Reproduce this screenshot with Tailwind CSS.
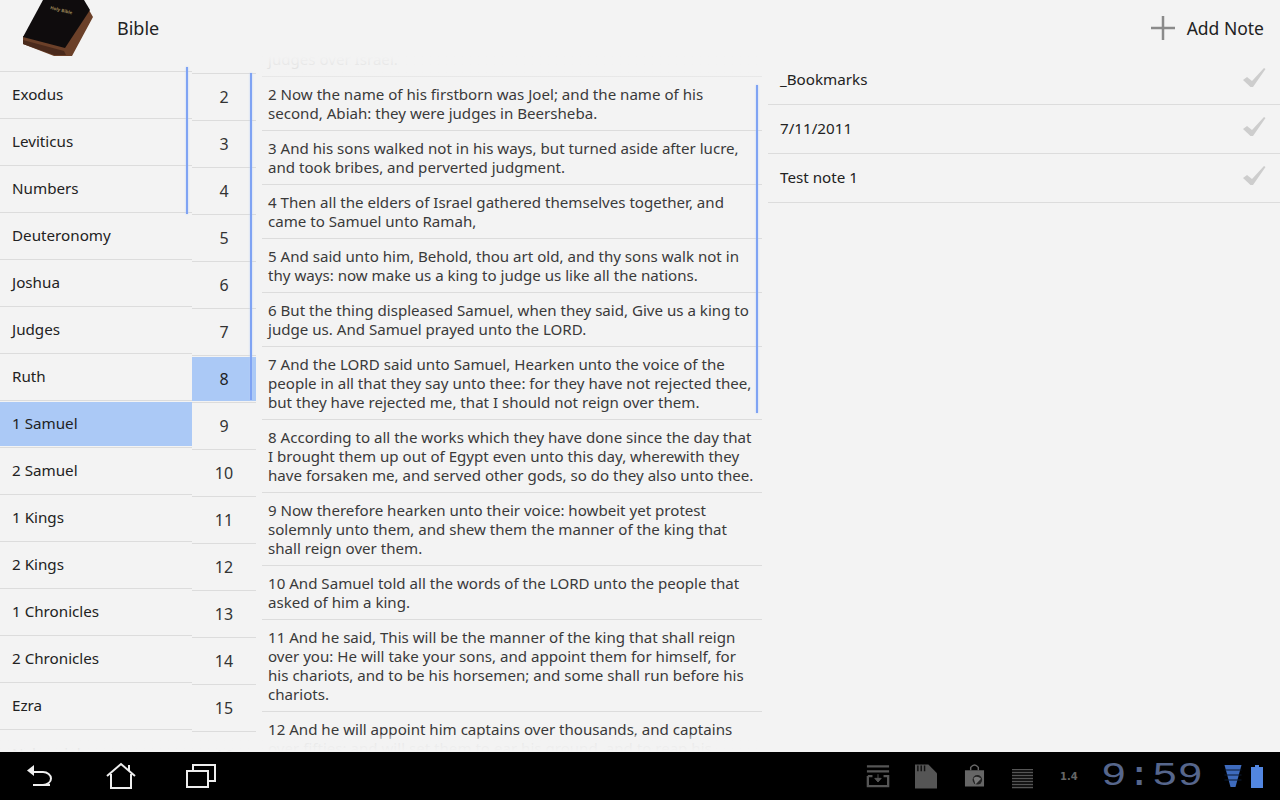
<!DOCTYPE html>
<html lang="en">
<head>
    <meta charset="UTF-8">
    <meta name="viewport" content="width=device-width, initial-scale=1.0">
    <title>Bible</title>
    <script src="https://cdn.jsdelivr.net/npm/@tailwindcss/browser@4"></script>
</head>
<body class="w-[1280px] h-[800px] overflow-hidden flex flex-col bg-[#f3f3f3] text-[#222] font-['Noto_Sans','Open_Sans',sans-serif]">

    <!-- Action bar -->
    <header class="h-[56px] shrink-0 flex items-center pl-[22px] pr-[16px]">
        <svg class="w-[74px] h-[56px]" viewBox="0 0 74 56">
            <path d="M1 36 L43 46 L67 10 L71 17 L50 56 L32 56 L1 44 Z" fill="#6b4029"/>
            <path d="M1 40 L42 51 L44 55 L32 55 L1 44 Z" fill="#4a2a1c"/>
            <path d="M21 0 L62 0 L68 10 L43 48 L1 37 Z" fill="#0f0c0d"/>
            <text x="28" y="9" transform="rotate(14 28 9)" font-size="4.5" fill="#9a8456" font-weight="700">Holy Bible</text>
        </svg>
        <span class="ml-[21px] text-[18px]">Bible</span>
        <button class="ml-auto flex items-center text-[17.5px]">
            <svg class="w-[24px] h-[24px] mr-[12px]" viewBox="0 0 24 24"><path d="M0 12H24M12 0V24" stroke="#8a8a8a" stroke-width="2.5"/></svg>
            Add Note
        </button>
    </header>

    <main class="h-[696px] flex">
        <!-- Books -->
        <section class="relative w-[192px] overflow-hidden pt-[15px] text-[15.2px]">
            <div class="border-t border-[#dcdcdc]">
                <div class="h-[47px] border-b border-[#dcdcdc] pl-[12px] pb-[1px] flex items-center">Exodus</div>
                <div class="h-[47px] border-b border-[#dcdcdc] pl-[12px] pb-[1px] flex items-center">Leviticus</div>
                <div class="h-[47px] border-b border-[#dcdcdc] pl-[12px] pb-[1px] flex items-center">Numbers</div>
                <div class="h-[47px] border-b border-[#dcdcdc] pl-[12px] pb-[1px] flex items-center">Deuteronomy</div>
                <div class="h-[47px] border-b border-[#dcdcdc] pl-[12px] pb-[1px] flex items-center">Joshua</div>
                <div class="h-[47px] border-b border-[#dcdcdc] pl-[12px] pb-[1px] flex items-center">Judges</div>
                <div class="h-[47px] border-b border-[#dcdcdc] pl-[12px] pb-[1px] flex items-center">Ruth</div>
                <div class="h-[47px] border-b border-[#dcdcdc] py-px bg-[#abc9f6] bg-clip-content"><div class="h-full pl-[12px] pb-[1px] flex items-center">1 Samuel</div></div>
                <div class="h-[47px] border-b border-[#dcdcdc] pl-[12px] pb-[1px] flex items-center">2 Samuel</div>
                <div class="h-[47px] border-b border-[#dcdcdc] pl-[12px] pb-[1px] flex items-center">1 Kings</div>
                <div class="h-[47px] border-b border-[#dcdcdc] pl-[12px] pb-[1px] flex items-center">2 Kings</div>
                <div class="h-[47px] border-b border-[#dcdcdc] pl-[12px] pb-[1px] flex items-center">1 Chronicles</div>
                <div class="h-[47px] border-b border-[#dcdcdc] pl-[12px] pb-[1px] flex items-center">2 Chronicles</div>
                <div class="h-[47px] border-b border-[#dcdcdc] pl-[12px] pb-[1px] flex items-center">Ezra</div>
                <div class="h-[47px] pl-[12px] pb-[1px] flex items-center">Nehemiah</div>
            </div>
            <div class="absolute left-0 right-0 bottom-0 h-[12px] bg-gradient-to-b from-[#f3f3f3]/80 to-[#f3f3f3]"></div>
            <div class="absolute left-[186px] top-[11px] w-[2px] h-[147px] bg-[#7fa3f3] shadow-[0_0_2px_#b5ccf8]"></div>
        </section>

        <!-- Chapters -->
        <section class="relative w-[64px] overflow-hidden pt-[17px] text-[16px] text-[#333]">
            <div class="border-t border-[#dcdcdc]">
                <div class="h-[47px] border-b border-[#dcdcdc] flex items-center justify-center">2</div>
                <div class="h-[47px] border-b border-[#dcdcdc] flex items-center justify-center">3</div>
                <div class="h-[47px] border-b border-[#dcdcdc] flex items-center justify-center">4</div>
                <div class="h-[47px] border-b border-[#dcdcdc] flex items-center justify-center">5</div>
                <div class="h-[47px] border-b border-[#dcdcdc] flex items-center justify-center">6</div>
                <div class="h-[47px] border-b border-[#dcdcdc] flex items-center justify-center">7</div>
                <div class="h-[47px] border-b border-[#dcdcdc] py-px bg-[#abc9f6] bg-clip-content"><div class="h-full flex items-center justify-center text-[#222]">8</div></div>
                <div class="h-[47px] border-b border-[#dcdcdc] flex items-center justify-center">9</div>
                <div class="h-[47px] border-b border-[#dcdcdc] flex items-center justify-center">10</div>
                <div class="h-[47px] border-b border-[#dcdcdc] flex items-center justify-center">11</div>
                <div class="h-[47px] border-b border-[#dcdcdc] flex items-center justify-center">12</div>
                <div class="h-[47px] border-b border-[#dcdcdc] flex items-center justify-center">13</div>
                <div class="h-[47px] border-b border-[#dcdcdc] flex items-center justify-center">14</div>
                <div class="h-[47px] border-b border-[#dcdcdc] flex items-center justify-center">15</div>
                <div class="h-[47px] flex items-center justify-center">16</div>
            </div>
            <div class="absolute left-0 right-0 bottom-0 h-[12px] bg-gradient-to-b from-[#f3f3f3]/80 to-[#f3f3f3]"></div>
            <div class="absolute left-[58px] top-[17px] w-[2px] h-[327px] bg-[#7fa3f3] shadow-[0_0_2px_#b5ccf8]"></div>
        </section>

        <!-- Verses -->
        <section class="relative ml-[6px] w-[500px] overflow-hidden text-[15.1px] leading-[19px] text-[#3a3a3a] whitespace-nowrap">
            <div class="h-[21px] border-b border-[#dcdcdc] px-[6px] flex items-end pb-[7px]"><span class="text-[#bbb]">judges over Israel.</span></div>
            <div class="border-b border-[#dcdcdc] px-[6px] pt-[8px] pb-[7px]">2 Now the name of his firstborn was Joel; and the name of his<br>second, Abiah: they were judges in Beersheba.</div>
            <div class="border-b border-[#dcdcdc] px-[6px] pt-[8px] pb-[7px]">3 And his sons walked not in his ways, but turned aside after lucre,<br>and took bribes, and perverted judgment.</div>
            <div class="border-b border-[#dcdcdc] px-[6px] pt-[8px] pb-[7px]">4 Then all the elders of Israel gathered themselves together, and<br>came to Samuel unto Ramah,</div>
            <div class="border-b border-[#dcdcdc] px-[6px] pt-[8px] pb-[7px]">5 And said unto him, Behold, thou art old, and thy sons walk not in<br>thy ways: now make us a king to judge us like all the nations.</div>
            <div class="border-b border-[#dcdcdc] px-[6px] pt-[8px] pb-[7px]">6 But the thing displeased Samuel, when they said, Give us a king to<br>judge us. And Samuel prayed unto the LORD.</div>
            <div class="border-b border-[#dcdcdc] px-[6px] pt-[8px] pb-[7px]">7 And the LORD said unto Samuel, Hearken unto the voice of the<br>people in all that they say unto thee: for they have not rejected thee,<br>but they have rejected me, that I should not reign over them.</div>
            <div class="border-b border-[#dcdcdc] px-[6px] pt-[8px] pb-[7px]">8 According to all the works which they have done since the day that<br>I brought them up out of Egypt even unto this day, wherewith they<br>have forsaken me, and served other gods, so do they also unto thee.</div>
            <div class="border-b border-[#dcdcdc] px-[6px] pt-[8px] pb-[7px]">9 Now therefore hearken unto their voice: howbeit yet protest<br>solemnly unto them, and shew them the manner of the king that<br>shall reign over them.</div>
            <div class="border-b border-[#dcdcdc] px-[6px] pt-[8px] pb-[7px]">10 And Samuel told all the words of the LORD unto the people that<br>asked of him a king.</div>
            <div class="border-b border-[#dcdcdc] px-[6px] pt-[8px] pb-[7px]">11 And he said, This will be the manner of the king that shall reign<br>over you: He will take your sons, and appoint them for himself, for<br>his chariots, and to be his horsemen; and some shall run before his<br>chariots.</div>
            <div class="px-[6px] pt-[8px] pb-[7px]">12 And he will appoint him captains over thousands, and captains<br>over fifties; and will set them to ear his ground, and to reap his</div>
            <div class="absolute left-0 right-0 top-0 h-[21px] bg-gradient-to-b from-[#f3f3f3] to-[#f3f3f3]/50"></div>
            <div class="absolute left-0 right-0 bottom-0 h-[17px] bg-gradient-to-b from-[#f3f3f3]/40 via-[#f3f3f3]/95 to-[#f3f3f3]"></div>
            <div class="absolute left-[494px] top-[29px] w-[2px] h-[328px] bg-[#7fa3f3] shadow-[0_0_2px_#b5ccf8]"></div>
        </section>

        <!-- Notes -->
        <section class="ml-[6px] w-[512px] text-[15.2px]">
            <div class="h-[49px] border-b border-[#dcdcdc] pl-[12px] pr-[14px] pb-[1px] flex items-center justify-between">
                _Bookmarks
                <svg class="w-[24px] h-[20px] -mt-[3px]" viewBox="0 0 24 20"><path d="M1 12 L5 9 L10 13 L22 0 L23.5 1 L11 19 L8.5 19 Z" fill="#cdcdcd"/></svg>
            </div>
            <div class="h-[49px] border-b border-[#dcdcdc] pl-[12px] pr-[14px] pb-[1px] flex items-center justify-between">
                7/11/2011
                <svg class="w-[24px] h-[20px] -mt-[3px]" viewBox="0 0 24 20"><path d="M1 12 L5 9 L10 13 L22 0 L23.5 1 L11 19 L8.5 19 Z" fill="#cdcdcd"/></svg>
            </div>
            <div class="h-[49px] border-b border-[#dcdcdc] pl-[12px] pr-[14px] pb-[1px] flex items-center justify-between">
                Test note 1
                <svg class="w-[24px] h-[20px] -mt-[3px]" viewBox="0 0 24 20"><path d="M1 12 L5 9 L10 13 L22 0 L23.5 1 L11 19 L8.5 19 Z" fill="#cdcdcd"/></svg>
            </div>
        </section>
    </main>

    <!-- System bar -->
    <footer class="h-[48px] shrink-0 bg-black flex items-center pl-[26px] pr-[17px]">
        <svg class="w-[28px] h-[26px]" viewBox="0 0 28 26"><path d="M24 22 H7 M7 9 H17 A8 6.5 0 0 1 17 22" fill="none" stroke="#eee" stroke-width="2"/><path d="M1 7.5 L8 2 V13 Z" fill="#eee"/></svg>
        <svg class="w-[30px] h-[28px] ml-[52px]" viewBox="0 0 30 28"><path d="M1 14 L15 2 L29 14 M5 12 V26 H25 V12 M23 3 V9" fill="none" stroke="#eee" stroke-width="2"/></svg>
        <svg class="w-[30px] h-[26px] ml-[50px]" viewBox="0 0 30 26"><path d="M1 8 H22 V24 H1 Z M7 8 V2 H29 V18 H22" fill="none" stroke="#eee" stroke-width="2"/></svg>

        <svg class="w-[24px] h-[25px] ml-auto" viewBox="0 0 26 25"><path d="M1 1.5H25M1 7H25" stroke="#555" stroke-width="2.5"/><path d="M2 12V23H24V12H19M7 12H2" fill="none" stroke="#555" stroke-width="2.5"/><path d="M13 10V16M9.5 14.5 L13 18.5 L16.5 14.5Z" fill="#555" stroke="#555"/></svg>
        <svg class="w-[22px] h-[25px] ml-[25px]" viewBox="0 0 23 25"><path d="M0 0H14L23 9V25H0Z" fill="#555"/><path d="M3 1V7M6.5 1V7M10 1V7" stroke="#111" stroke-width="1.5"/></svg>
        <svg class="w-[21px] h-[26px] ml-[27px]" viewBox="0 0 22 26"><path d="M1 7H21V24H1Z" fill="#666"/><path d="M7 7V4Q11 -1 15 4V7" fill="none" stroke="#666" stroke-width="1.5"/><circle cx="14" cy="17" r="5" fill="#222"/><path d="M10 15Q14 12 18 16Q14 20 12 22Z" fill="#777"/></svg>
        <div class="w-[21px] h-[20px] ml-[27px] mt-[5px] bg-[repeating-linear-gradient(to_bottom,#555_0,#555_1px,#151515_1px,#151515_3px)]"></div>
        <span class="ml-[27px] w-[18px] text-[10px] font-bold text-[#666] font-['DejaVu_Sans',sans-serif]">1.4</span>
        <div class="w-[101px] ml-[23px] text-[34px] leading-none font-['Liberation_Mono',monospace] text-[#56668c] scale-x-[1.25] origin-left">9:59</div>
        <svg class="w-[18px] h-[24px] ml-[22px]" viewBox="0 0 17 24"><path d="M0 1H17L11 23H6Z" fill="#3e6bbd"/><path d="M0 6H17M0 11H17M0 16H17" stroke="#0a1a33" stroke-width="1"/></svg>
        <svg class="w-[12px] h-[24px] ml-[9px]" viewBox="0 0 12 24"><path d="M4 1H8V3H12V24H0V3H4Z" fill="#5286e0"/></svg>
    </footer>

</body>
</html>
